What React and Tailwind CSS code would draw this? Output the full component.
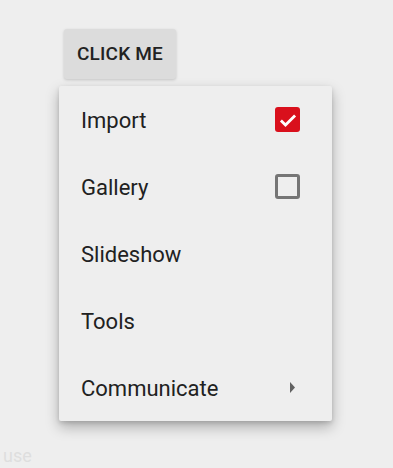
export default function App() {
  const items = [
    { label: "Import", right: "checked" },
    { label: "Gallery", right: "unchecked" },
    { label: "Slideshow" },
    { label: "Tools" },
    { label: "Communicate", right: "arrow" },
  ];
  return (
    <div
      className="relative w-[393px] h-[468px] bg-[#eeeeee] overflow-hidden"
      style={{ fontFamily: "Roboto, 'Noto Sans', sans-serif" }}
    >
      <div className="pt-[29px] pl-[64px]">
        <button className="w-[112px] h-[50px] rounded-[3px] bg-[#dcdcdc] shadow-[0_1px_3px_rgba(0,0,0,0.18)] text-[19px] font-medium text-[#222] tracking-[0.2px]">
          CLICK ME
        </button>
      </div>
      <div className="ml-[59px] mt-[7px] w-[273px] bg-[#eeeeee] rounded-[2px] shadow-[0_6px_14px_rgba(0,0,0,0.28),0_2px_4px_rgba(0,0,0,0.12)]">
        {items.map((it) => (
          <div
            key={it.label}
            className="h-[67px] flex items-center justify-between pl-[22px] pr-[32px] text-[22px] text-[#212121]"
          >
            <span className="pt-[1px]">{it.label}</span>
            {it.right === "checked" && (
              <div className="w-[25px] h-[25px] rounded-[3px] bg-[#d9101c] flex items-center justify-center">
                <svg width="20" height="20" viewBox="0 0 24 24">
                  <path d="M3.5 12.5l5.5 5.5L20.5 6.5" fill="none" stroke="#fff" strokeWidth="3.4" />
                </svg>
              </div>
            )}
            {it.right === "unchecked" && (
              <div className="w-[25px] h-[25px] rounded-[3px] border-[3px] border-[#757575]" />
            )}
            {it.right === "arrow" && (
              <svg width="25" height="25" viewBox="0 0 25 25">
                <path d="M15 7 L20 12.5 L15 18 Z" fill="#616161" />
              </svg>
            )}
          </div>
        ))}
      </div>
      <div className="absolute left-[3px] top-[442px] text-[18px] text-[#dedede]">use</div>
    </div>
  );
}
